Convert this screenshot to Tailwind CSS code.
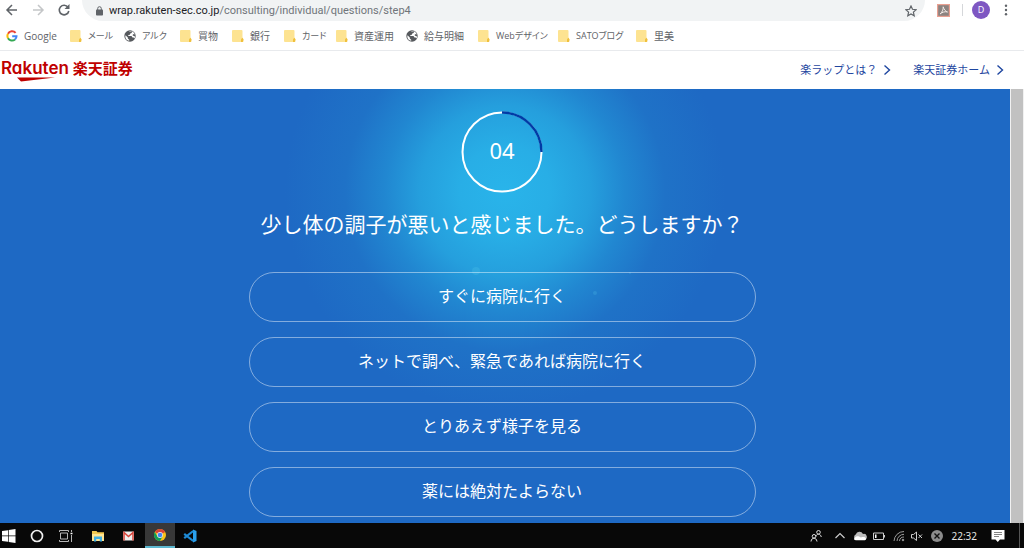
<!DOCTYPE html>
<html lang="ja">
<head>
  <meta charset="utf-8">
  <meta name="viewport" content="width=device-width, initial-scale=1">
  <title>楽ラップ</title>
  <script src="https://cdn.jsdelivr.net/npm/@tailwindcss/browser@4"></script>
</head>
<body class="flex flex-col h-screen overflow-hidden bg-white font-['Open_Sans','Noto_Sans_CJK_JP',sans-serif]">

  <!-- shared icons -->
  <svg class="hidden">
    <symbol id="folder" viewBox="0 0 12 12">
      <path d="M1 0h8.500a1 1 0 0 1 1 1v6.500l.8 1.200v2.300a1 1 0 0 1-1 1H1a1 1 0 0 1-1-1V1a1 1 0 0 1 1-1z" fill="#fde391"/>
      <path d="M9 12V9.200l1.400-1.400.9 1.400V11a1 1 0 0 1-1 1z" fill="#f0c03c"/>
    </symbol>
    <symbol id="globe" viewBox="0 0 12 12">
      <circle cx="6" cy="6" r="5.700" fill="#56595d"/>
      <path d="M1.500 5.300l2.300 2.200v1l1.400 1.300v1C3 10.600 1.300 8.800 1.300 6.500zM4.500 2l1.700-.7 1.800.5-.4 1.300-1.400.4-.3 1.200-1.600.3v1h3.200l1 1.400h1.100l.9 1.200 .5-1.600-.6-1-1.500-.2-.3-1 1.300-.7.8.6C10.500 3 9.400 2 8.400 1.500" fill="#fff"/>
    </symbol>
    <symbol id="chevron" viewBox="0 0 8 12">
      <path d="M1.500 1.500L6.500 6l-5 4.500" fill="none" stroke="currentColor" stroke-width="1.400"/>
    </symbol>
  </svg>

  <!-- browser toolbar -->
  <div class="flex items-start h-[21px] pl-1 text-[#5f6368]">
    <button aria-label="戻る" class="w-4 h-4 mt-[2px]">
      <svg viewBox="0 0 16 16" fill="none" stroke="currentColor" stroke-width="1.500"><path d="M13 8H3.500M8 3L3 8l5 5"/></svg>
    </button>
    <button aria-label="進む" class="w-4 h-4 mt-[2px] ml-[10px] text-[#c4c6c8]">
      <svg viewBox="0 0 16 16" fill="none" stroke="currentColor" stroke-width="1.500"><path d="M3 8h9.500M8 3l5 5-5 5"/></svg>
    </button>
    <button aria-label="再読み込み" class="w-4 h-4 mt-[2px] ml-[10px]">
      <svg viewBox="0 0 16 16"><path d="M12 5.200A4.800 4.800 0 1 0 12.800 9" fill="none" stroke="currentColor" stroke-width="1.600"/><path d="M13.500 2v5h-5z" fill="currentColor"/></svg>
    </button>
    <div class="flex items-center flex-1 h-[21px] ml-[10px] pl-[14px] pr-2 rounded-b-full bg-[#f1f3f4]">
      <svg class="w-[7px] h-[10px] shrink-0" viewBox="0 0 7 10"><rect y="3.500" width="7" height="6" rx=".8" fill="#5f6368"/><path d="M1.700 4V2.500a1.800 1.800 0 0 1 3.600 0V4" fill="none" stroke="#5f6368"/></svg>
      <div class="flex-1 ml-[6px] font-['Roboto'] text-[11px] leading-5 whitespace-nowrap text-[#70757a]"><span class="text-[#202124]">wrap.rakuten-sec.co.jp</span>/consulting/individual/questions/step4</div>
      <button aria-label="ブックマーク" class="w-3 h-3">
        <svg viewBox="0 0 12 12"><path d="M6 1l1.500 3.300 3.600.4-2.700 2.400.8 3.600L6 8.900l-3.200 1.800.8-3.600L.9 4.700l3.600-.4z" fill="none" stroke="#5f6368" stroke-width="1.200"/></svg>
      </button>
    </div>
    <button aria-label="PDF" class="w-[13px] h-[13px] mt-1 ml-3">
      <svg viewBox="0 0 13 13"><rect x=".6" y=".6" width="11.800" height="11.800" fill="#8b8380" stroke="#e9a091" stroke-width="1.200"/><path d="M3 10c2-1.500 3.500-4.500 3.200-7.200C7 5.500 8.500 7.500 10.500 8 8 7.300 5.500 8 3 10z" fill="none" stroke="#f3e9e6"/></svg>
    </button>
    <div class="w-px h-3 mt-1 ml-3 bg-[#d5d7da]"></div>
    <button class="w-[18px] h-[18px] mt-px ml-[9px] rounded-full bg-[#7e57c2] text-[9px] leading-[18px] text-white">D</button>
    <button aria-label="メニュー" class="w-3 h-3 mt-1 ml-[10px] mr-3">
      <svg viewBox="0 0 12 12" fill="currentColor"><circle cx="6" cy="1.800" r="1.200"/><circle cx="6" cy="6" r="1.200"/><circle cx="6" cy="10.200" r="1.200"/></svg>
    </button>
  </div>

  <!-- bookmarks -->
  <nav class="flex items-center h-[30px] pl-[6px] pt-px border-b border-[#e8eaed] text-[10px] whitespace-nowrap text-[#5f6368] [font-feature-settings:'palt']">
    <a href="#" class="flex items-center gap-[6px] w-16">
      <svg class="w-3 h-3 shrink-0" viewBox="0 0 12 12" fill="none" stroke-width="2"><path d="M9.600 2.800A4.600 4.600 0 0 0 2 3.800" stroke="#ea4335"/><path d="M2 3.800a4.600 4.600 0 0 0 0 4.400" stroke="#fbbc05"/><path d="M2 8.200a4.600 4.600 0 0 0 7 1.300" stroke="#34a853"/><path d="M9 9.500c1-.9 1.500-2 1.500-3.300H6.200" stroke="#4285f4"/></svg>
      Google
    </a>
    <a href="#" class="flex items-center gap-[6px] w-[54px] text-[9px]"><svg class="w-3 h-3 shrink-0"><use href="#folder"/></svg>メール</a>
    <a href="#" class="flex items-center gap-[6px] w-14 text-[9px]"><svg class="w-3 h-3 shrink-0"><use href="#globe"/></svg>アルク</a>
    <a href="#" class="flex items-center gap-[6px] w-13"><svg class="w-3 h-3 shrink-0"><use href="#folder"/></svg>買物</a>
    <a href="#" class="flex items-center gap-[6px] w-13"><svg class="w-3 h-3 shrink-0"><use href="#folder"/></svg>銀行</a>
    <a href="#" class="flex items-center gap-[6px] w-13 text-[9px]"><svg class="w-3 h-3 shrink-0"><use href="#folder"/></svg>カード</a>
    <a href="#" class="flex items-center gap-[6px] w-[70px]"><svg class="w-3 h-3 shrink-0"><use href="#folder"/></svg>資産運用</a>
    <a href="#" class="flex items-center gap-[6px] w-18"><svg class="w-3 h-3 shrink-0"><use href="#globe"/></svg>給与明細</a>
    <a href="#" class="flex items-center gap-[6px] w-20 text-[9px]"><svg class="w-3 h-3 shrink-0"><use href="#folder"/></svg>Webデザイン</a>
    <a href="#" class="flex items-center gap-[6px] w-[78px] text-[9px]"><svg class="w-3 h-3 shrink-0"><use href="#folder"/></svg>SATOブログ</a>
    <a href="#" class="flex items-center gap-[6px]"><svg class="w-3 h-3 shrink-0"><use href="#folder"/></svg>里美</a>
  </nav>

  <header class="flex items-center justify-between h-[38px] pl-[1px] pr-5">
    <a href="#" class="flex items-center gap-1 pb-1 font-bold text-[#bf0000]">
      <span class="relative font-['Inter'] font-semibold text-[17px] leading-6 [font-feature-settings:'cv11']">
        Rakuten
        <svg class="absolute left-4 top-[21px] w-10 h-[5px]" viewBox="0 0 40 5"><path d="M0 .5h38L4 4.500z" fill="#bf0000"/></svg>
      </span>
      <span class="text-[15px] leading-5">楽天証券</span>
    </a>
    <nav class="flex gap-[22px] text-[11px] leading-4 text-[#1e46a0]">
      <a href="#" class="flex items-center gap-[6px]">楽ラップとは？<svg class="w-2 h-3"><use href="#chevron"/></svg></a>
      <a href="#" class="flex items-center gap-[6px]">楽天証券ホーム<svg class="w-2 h-3"><use href="#chevron"/></svg></a>
    </nav>
  </header>

  <div class="flex flex-1 min-h-0">
    <main class="relative flex flex-col items-center flex-1 pt-[22px] pr-[6px] overflow-hidden text-white bg-[#1e69c4] bg-[radial-gradient(circle_at_50%_102px,#29b4ea_0,#28aee6_45px,#259fdd_85px,#2187d1_120px,#1f72c7_160px,#1e69c4_220px)]">
      <!-- bubbles -->
      <svg class="absolute inset-x-0 top-0 w-full h-60" fill="#5fd0ee"><circle cx="476" cy="182" r="4" fill-opacity=".2"/><circle cx="595" cy="204" r="2" fill-opacity=".2"/><circle cx="630" cy="184" r="1" fill-opacity=".2"/></svg>

      <div class="relative w-[82px] h-[82px]">
        <svg viewBox="0 0 82 82" fill="none" stroke-width="2"><circle cx="41" cy="41" r="39.500" stroke="#fff"/><path d="M41 1.500A39.500 39.500 0 0 1 80.500 41" stroke="#003ca6" stroke-width="2.400"/></svg>
        <span class="absolute inset-0 flex items-center justify-center font-['Noto_Sans'] text-[22px] leading-7 pb-1">04</span>
      </div>

      <h1 class="relative mt-[15px] text-[21px] leading-8">少し体の調子が悪いと感じました。どうしますか？</h1>

      <div class="relative flex flex-col gap-[15px] w-full max-w-[507px] mt-8 text-base">
        <button class="h-[50px] pb-[2px] border border-white/45 rounded-full">すぐに病院に行く</button>
        <button class="h-[50px] pb-[2px] border border-white/45 rounded-full">ネットで調べ、緊急であれば病院に行く</button>
        <button class="h-[50px] pb-[2px] border border-white/45 rounded-full">とりあえず様子を見る</button>
        <button class="h-[50px] pb-[2px] border border-white/45 rounded-full">薬には絶対たよらない</button>
      </div>
    </main>
    <div class="w-[14px] px-px bg-[#f1f1f1]"><div class="h-full bg-[#c1c1c1]"></div></div>
  </div>

  <!-- taskbar -->
  <footer class="flex items-center justify-between h-[25px] text-white bg-[#080808]">
    <div class="flex items-center h-full">
      <button aria-label="スタート" class="w-[18px] pl-[2px]">
        <svg class="w-[14px] h-[14px]" viewBox="0 0 14 14" fill="#fff"><path d="M0 2l6-.8v5.400H0zM6.700 1.100L13.500 0v6.600H6.700zM0 7.300h6v5.500L0 12zM6.700 7.300h6.800V14l-6.800-1.100z"/></svg>
      </button>
      <button aria-label="検索" class="w-[38px] flex justify-center">
        <svg class="w-[14px] h-[14px]" viewBox="0 0 14 14"><circle cx="7" cy="7" r="5.500" fill="none" stroke="#eee" stroke-width="1.700"/></svg>
      </button>
      <button aria-label="タスクビュー" class="w-5 flex justify-center">
        <svg class="w-[14px] h-[14px]" viewBox="0 0 14 14" fill="none" stroke="#b5b5b5"><path d="M1.500 4h7v6h-7zM.5 1.500v1.500M.5 1.500h9V3M.5 12.500V11M.5 12.500h9V11M12.500 1v2M12.500 6v7"/><path d="M11.500 4.500h2" stroke="#fff" stroke-width="1.500"/></svg>
      </button>
      <button aria-label="エクスプローラー" class="w-11 flex justify-center">
        <svg class="w-3 h-3" viewBox="0 0 12 12"><path d="M0 1h4.500l1 1.200H12V11H0z" fill="#f3c850"/><path d="M0 4h12v7H0z" fill="#ffe594"/><path d="M2 11.500V6.500h8v5H7.800V9H4.200v2.500z" fill="#42b0e2"/></svg>
      </button>
      <button aria-label="Gmail" class="w-[17px] flex justify-center">
        <svg class="w-[11px] h-[10px]" viewBox="0 0 11 10"><rect y=".5" width="11" height="9" rx="1" fill="#eee"/><path d="M1 9.500V1.500L5.500 5.500 10 1.500v8" fill="none" stroke="#d8443a" stroke-width="1.500"/></svg>
      </button>
      <button aria-label="Chrome" class="flex items-center justify-center w-[30px] h-full ml-2 bg-[#383838] border-b-2 border-[#5cb8d0]">
        <svg class="w-3 h-3" viewBox="0 0 12 12"><circle cx="6" cy="6" r="6" fill="#fbc116"/><path d="M6 6L.8 3A6 6 0 0 1 11.200 3z" fill="#db4437"/><path d="M.8 3A6 6 0 0 0 6 12l2.600-4.500L3.400 7.500z" fill="#0f9d58"/><circle cx="6" cy="6" r="2.900" fill="#eee"/><circle cx="6" cy="6" r="2.300" fill="#4285f4"/></svg>
      </button>
      <button aria-label="VS Code" class="w-[30px] flex justify-center">
        <svg class="w-[14px] h-[14px]" viewBox="0 0 14 14"><path d="M10 .5L13.500 2v10L10 13.500z" fill="#2aa0ec"/><path d="M1.200 4.800l9 7.200M1.200 9.200L10.200 2" stroke="#1f8bd6" stroke-width="2.200" fill="none"/></svg>
      </button>
    </div>

    <div class="flex items-center h-full text-[#ccc]">
      <svg class="w-3 h-3" viewBox="0 0 12 12" fill="none" stroke="#ddd"><circle cx="8.500" cy="2.300" r="1.800"/><path d="M6 6.500c.3-1.600 1.200-2.300 2.500-2.300s2.300.9 2.800 2.800"/><circle cx="4" cy="6.300" r="1.800"/><path d="M1 11.500c.3-2.300 1.500-3.300 3-3.300s2.500 1 3 3.300"/></svg>
      <svg class="w-[10px] h-3 ml-[13px]" viewBox="0 0 10 12" fill="none" stroke="currentColor" stroke-width="1.200"><path d="M.5 8L5 3.500 9.500 8"/></svg>
      <svg class="w-[14px] h-3 ml-2" viewBox="0 0 14 12"><path d="M3 10a3 3 0 0 1-.3-5.500A4 4 0 0 1 10 4a3 3 0 0 1 1.500 6z" fill="#bbb"/><path d="M2 7.500c2-2 3.500-1 6 0 2-1 5-.5 5 1.500 0 1-1 1.300-2 1.300H3c-2 0-2.500-1.500-1-2.800z" fill="#fff"/></svg>
      <svg class="w-3 h-3 ml-[6px]" viewBox="0 0 12 12"><path d="M.5 3h10v6.500H.5zM11.500 5v2.500" fill="none" stroke="currentColor"/><path d="M2 4.500h1.500V8H2z" fill="#fff"/></svg>
      <svg class="w-3 h-3 ml-2" viewBox="0 0 12 12" fill="none" stroke="#999"><path d="M1 11A10 10 0 0 1 11 1.500M4 11A7 7 0 0 1 11 4.300M6.500 11A4.500 4.500 0 0 1 11 7"/><circle cx="10" cy="10" r=".8" fill="#ddd"/></svg>
      <svg class="w-3 h-3 ml-[6px]" viewBox="0 0 12 12" fill="none" stroke="currentColor"><path d="M.5 4.500h2L5.500 2v8.500L2.500 8h-2zM7.500 4.500l3.500 3.500M11 4.500L7.500 8"/></svg>
      <svg class="w-3 h-3 ml-2" viewBox="0 0 12 12"><circle cx="6" cy="6" r="6" fill="#8c8c8c"/><path d="M3.500 3.500l5 5M8.500 3.500l-5 5" stroke="#111" stroke-width="1.400"/></svg>
      <time class="ml-2 font-['Noto_Sans'] text-[10px] leading-4 text-[#e5e5e5]">22:32</time>
      <button aria-label="通知" class="w-[14px] h-[14px] ml-[14px] mr-[14px]">
        <svg viewBox="0 0 14 14"><path d="M.5 1h13v9.500H9L6.800 13 4.500 10.500h-4z" fill="#fff"/><path d="M3 3.500h8M3 5.500h8M3 7.500h5" stroke="#666" stroke-width=".8"/></svg>
      </button>
      <div class="w-px h-full mr-1 bg-[#555]"></div>
    </div>
  </footer>
</body>
</html>
